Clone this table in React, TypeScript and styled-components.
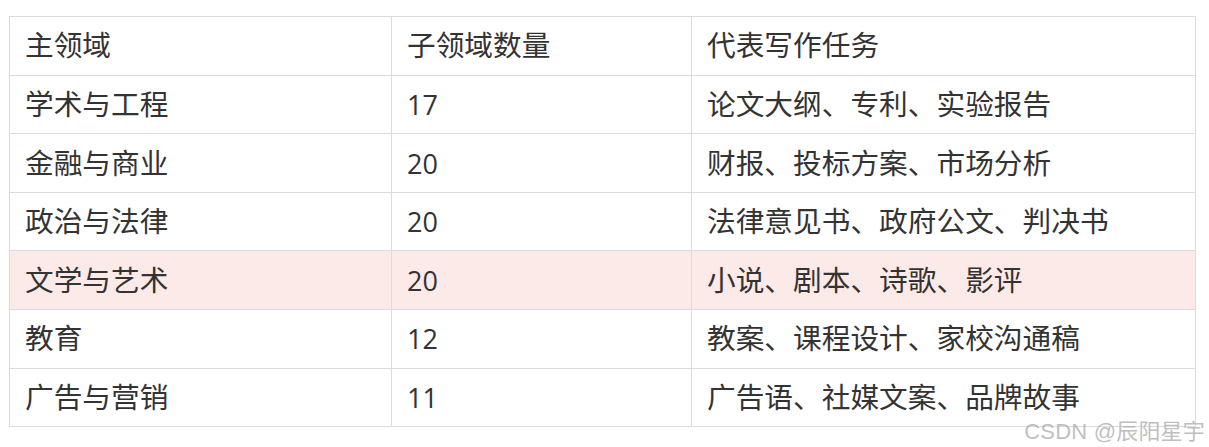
import React from "react";
import styled, { createGlobalStyle } from "styled-components";

const Global = createGlobalStyle`
  html, body { margin: 0; padding: 0; background: #ffffff; }
  body { font-family: "Open Sans", "Noto Sans CJK SC", sans-serif; }
`;

const Page = styled.div`
  position: relative;
  width: 1209px;
  height: 447px;
  padding: 16px 0 0 9px;
  box-sizing: border-box;
  overflow: hidden;
`;

const Table = styled.table`
  border-collapse: collapse;
  table-layout: fixed;
  width: 1186px;
  color: #333333;
  font-family: "Open Sans", "Noto Sans CJK SC", sans-serif;
  font-size: 28.7px;
`;

const Col = styled.col<{ $w: number }>`
  width: ${(p) => p.$w}px;
`;

const Row = styled.tr<{ $hl?: boolean }>`
  height: 58.6px;
  background: ${(p) => (p.$hl ? "#fbeae8" : "#ffffff")};
`;

const Cell = styled.td`
  border: 1px solid #dcdcdc;
  padding: 0 0 0 15px;
  vertical-align: middle;
  white-space: nowrap;
  line-height: 1;
`;

const Num = styled.span`
  font-size: 27px;
`;

const Watermark = styled.div`
  position: absolute;
  right: 4px;
  bottom: 2px;
  font-family: "Liberation Sans", "Noto Sans CJK SC", sans-serif;
  font-size: 22px;
  color: rgba(170, 170, 170, 0.75);
  letter-spacing: 0.2px;
`;

const rows: [string, string, string][] = [
  ["主领域", "子领域数量", "代表写作任务"],
  ["学术与工程", "17", "论文大纲、专利、实验报告"],
  ["金融与商业", "20", "财报、投标方案、市场分析"],
  ["政治与法律", "20", "法律意见书、政府公文、判决书"],
  ["文学与艺术", "20", "小说、剧本、诗歌、影评"],
  ["教育", "12", "教案、课程设计、家校沟通稿"],
  ["广告与营销", "11", "广告语、社媒文案、品牌故事"],
];

const widths = [382, 300, 504];

export default function App() {
  return (
    <>
      <Global />
      <Page>
        <Table>
          <colgroup>
            {widths.map((w, i) => (
              <Col key={i} $w={w} />
            ))}
          </colgroup>
          <tbody>
            {rows.map((r, i) => (
              <Row key={i} $hl={i === 4}>
                {r.map((c, j) => (
                  <Cell key={j}>{/^\d+$/.test(c) ? <Num>{c}</Num> : c}</Cell>
                ))}
              </Row>
            ))}
          </tbody>
        </Table>
        <Watermark>CSDN @辰阳星宇</Watermark>
      </Page>
    </>
  );
}
